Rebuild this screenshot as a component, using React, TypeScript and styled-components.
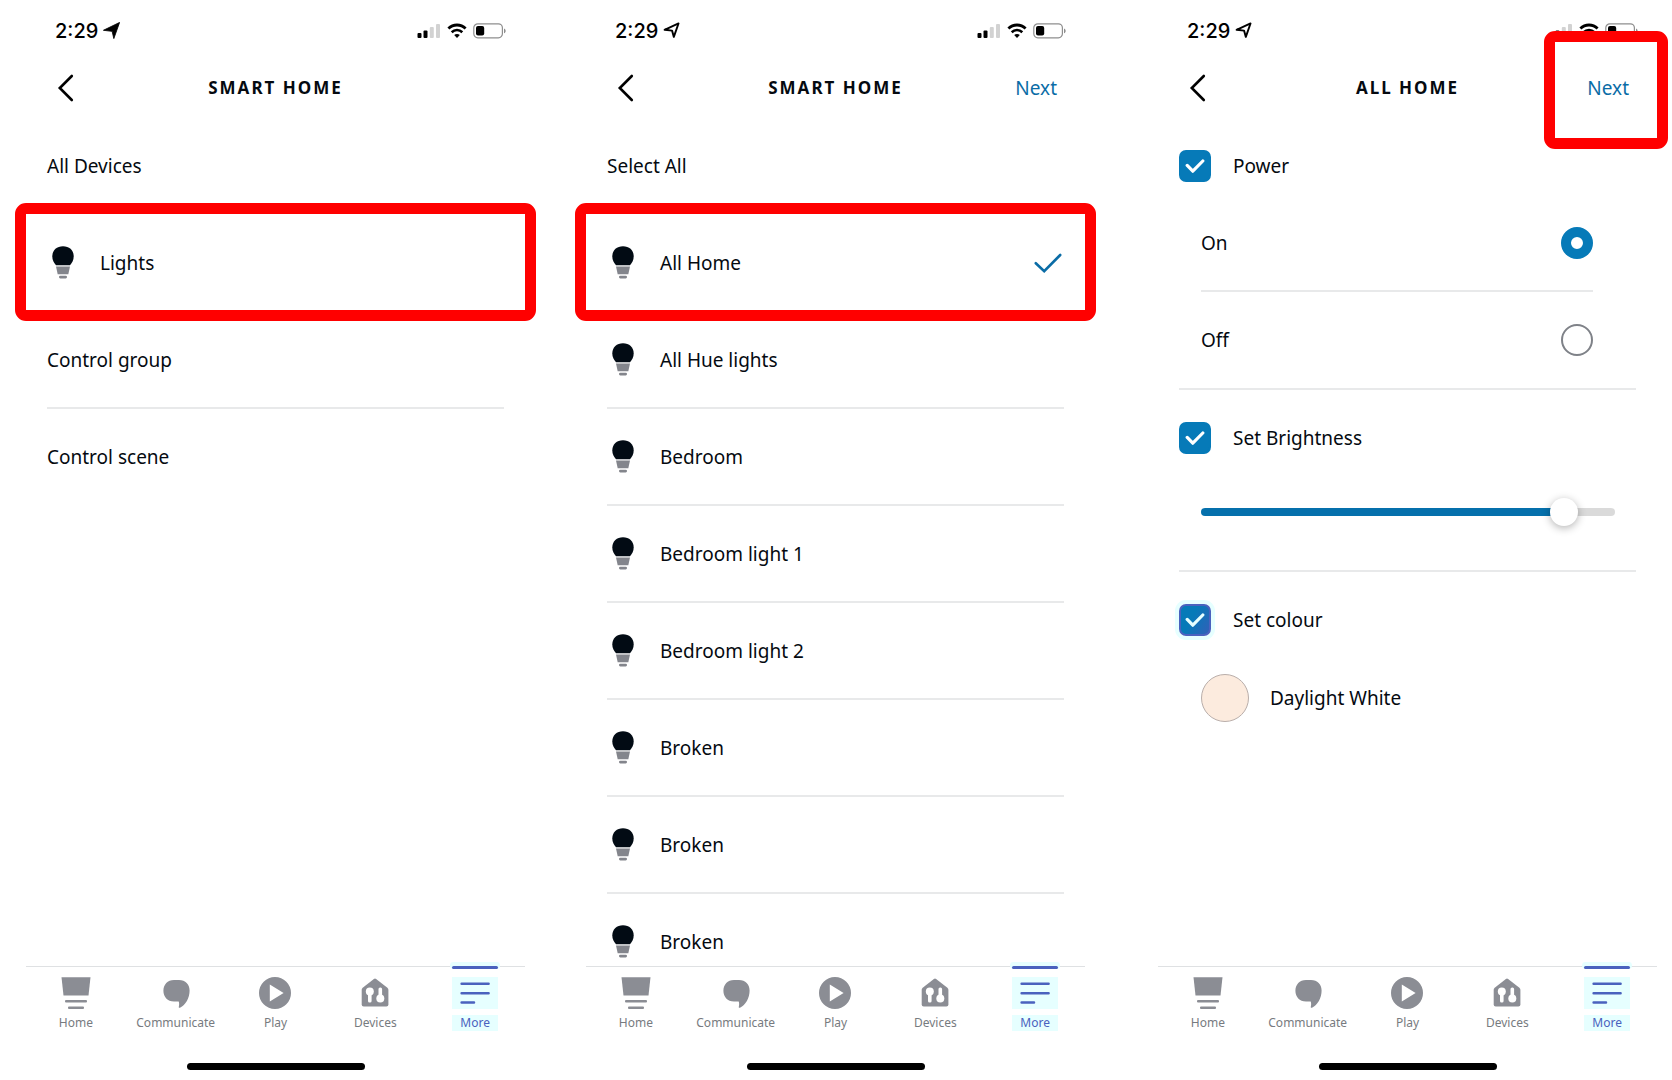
import React, { useState } from "react";
import styled, { createGlobalStyle, css } from "styled-components";

const colors = {
  ink: "#050a10",
  accent: "#0a6ca6",
  control: "#067ab8",
  active: "#4a62be",
  activeTint: "#e6ffff",
  muted: "#8b8d94",
  label: "#777b80",
  line: "#e8e9ea",
  mark: "#ff0000",
};

const GlobalStyle = createGlobalStyle`
  *, *::before, *::after { box-sizing: border-box; }
  body { margin: 0; background: #fff; }
  button, input { font: inherit; color: inherit; }
`;

const Page = styled.main`
  display: flex;
  height: 100vh;
  min-height: 640px;
  padding: 0 15px 0 26px;
  gap: 61px;
  overflow: hidden;
  background: #fff;
  color: ${colors.ink};
  font-family: "Noto Sans", "Open Sans", sans-serif;
  font-size: 19px;
  line-height: 24px;
`;

const PhoneFrame = styled.section<{ $spaced?: boolean }>`
  display: flex;
  flex: 1 1 0;
  flex-direction: column;
  min-width: 0;
  margin-left: ${(p) => (p.$spaced ? "12px" : "0")};
`;

const StatusRow = styled.div`
  display: flex;
  align-items: center;
  justify-content: space-between;
  height: 61px;
  padding: 0 18px 0 29px;
`;

const Clock = styled.div`
  display: flex;
  align-items: center;
  gap: 5px;
  font-family: Inter, Roboto, sans-serif;
  font-size: 20px;
  font-weight: 500;
  color: #000;
`;

const StatusIcons = styled.div`
  display: flex;
  align-items: center;
  gap: 6px;
`;

const TitleBar = styled.header`
  position: relative;
  display: grid;
  grid-template-columns: 1fr auto 1fr;
  align-items: center;
  height: 57px;
  padding: 0 28px 3px;
`;

const Title = styled.h1`
  grid-column: 2;
  margin: 0;
  font-size: 17px;
  font-weight: 700;
  letter-spacing: 2px;
`;

const PlainButton = styled.button`
  padding: 0;
  border: 0;
  background: none;
  cursor: pointer;
`;

const BackButton = styled(PlainButton)`
  display: flex;
  justify-self: start;
  padding-left: 3px;
`;

const NextButton = styled(PlainButton)`
  justify-self: end;
  color: ${colors.accent};
`;

const markStyle = css`
  position: absolute;
  border: 11px solid ${colors.mark};
  border-radius: 11px;
  pointer-events: none;
`;

const ActionMark = styled.span`
  ${markStyle}
  top: -30px;
  right: -11px;
  width: 124px;
  height: 118px;
`;

const RowMark = styled.span`
  ${markStyle}
  inset: -12px -11px -9px;
`;

const Body = styled.div`
  flex: 1 1 0;
  min-height: 0;
  margin: 0 -11px;
  padding: 0 11px;
  overflow: hidden auto;
  scrollbar-width: none;
`;

const List = styled.ul`
  margin: 0;
  padding: 0;
  list-style: none;
`;

const ListItem = styled.li`
  position: relative;
  padding: 0 21px;
`;

const RowButton = styled(PlainButton)<{ $divided?: boolean }>`
  display: flex;
  align-items: center;
  width: 100%;
  height: 97px;
  border-bottom: 2px solid ${(p) => (p.$divided ? colors.line : "transparent")};
  text-align: left;
`;

const BulbSlot = styled.span`
  display: flex;
  margin: 0 26px 0 5px;
`;

const RowLabel = styled.span`
  flex: 1;
`;

const SelectedSlot = styled.span`
  display: flex;
  padding-right: 2px;
`;

const Form = styled.form`
  padding: 0 21px;
`;

const Field = styled.section<{ $last?: boolean }>`
  padding-top: 32px;
  border-bottom: ${(p) => (p.$last ? "0" : `2px solid ${colors.line}`)};
`;

const CheckLabel = styled.label`
  display: flex;
  align-items: center;
  gap: 22px;
  height: 32px;
`;

const CheckSlot = styled.span`
  display: grid;
  > * {
    grid-area: 1 / 1;
  }
  svg {
    place-self: center;
    pointer-events: none;
  }
`;

const CheckInput = styled.input<{ $glow?: boolean }>`
  appearance: none;
  width: 32px;
  height: 32px;
  margin: 0;
  border: 2px solid ${colors.muted};
  border-radius: 7px;
  background: #fff;
  &:checked {
    border-color: ${(p) => (p.$glow ? colors.active : colors.control)};
    background: ${colors.control};
    ${(p) =>
      p.$glow &&
      css`
        background: linear-gradient(120deg, ${colors.control} 40%, #3160b8);
        box-shadow: 0 0 0 4px ${colors.activeTint};
      `}
  }
`;

const Options = styled.div`
  margin: 14px 43px 0 22px;
`;

const OptionLabel = styled.label<{ $divided?: boolean }>`
  display: flex;
  align-items: center;
  justify-content: space-between;
  height: 96px;
  border-bottom: ${(p) => (p.$divided ? `2px solid ${colors.line}` : "0")};
`;

const RadioInput = styled.input`
  appearance: none;
  width: 32px;
  height: 32px;
  margin: 0;
  border: 2px solid #7f8288;
  border-radius: 50%;
  background: #fff;
  &:checked {
    border: 10px solid ${colors.control};
  }
`;

const Slider = styled.input<{ $value: number }>`
  appearance: none;
  display: block;
  width: calc(100% - 43px);
  height: 28px;
  margin: 44px 21px 44px 22px;
  background: none;
  &::-webkit-slider-runnable-track {
    height: 8px;
    border-radius: 4px;
    background: linear-gradient(
      to right,
      #0570ac ${(p) => p.$value}%,
      #dadada ${(p) => p.$value}%
    );
  }
  &::-webkit-slider-thumb {
    appearance: none;
    width: 28px;
    height: 28px;
    margin-top: -10px;
    border-radius: 50%;
    background: #fff;
    box-shadow: 0 2px 8px rgba(0, 0, 0, 0.3);
  }
`;

const ColourButton = styled(PlainButton)`
  display: flex;
  align-items: center;
  gap: 21px;
  margin: 38px 0 0 22px;
`;

const Swatch = styled.span`
  width: 48px;
  height: 48px;
  border: 1px solid #b9aeaa;
  border-radius: 50%;
  background: #fcebde;
`;

const Tabs = styled.nav`
  display: flex;
  height: 97px;
  border-top: 1px solid #dfe1e3;
`;

const TabLink = styled.a<{ $active?: boolean }>`
  position: relative;
  display: flex;
  flex: 1 1 0;
  flex-direction: column;
  align-items: center;
  gap: 6px;
  padding-top: 10px;
  color: ${(p) => (p.$active ? colors.active : colors.muted)};
  font-size: 12px;
  line-height: 16px;
  text-decoration: none;
`;

const TabIcon = styled.span<{ $active?: boolean }>`
  display: flex;
  padding: 0 7px;
  background: ${(p) => (p.$active ? colors.activeTint : "none")};
`;

const TabText = styled.span<{ $active?: boolean }>`
  color: ${(p) => (p.$active ? colors.active : colors.label)};
  background: ${(p) => (p.$active ? colors.activeTint : "none")};
  padding: 0 8px;
`;

const TabIndicator = styled.span`
  position: absolute;
  top: -1px;
  width: 46px;
  height: 3px;
  border-radius: 2px;
  background: ${colors.active};
  box-shadow: 0 -2px 0 2px ${colors.activeTint};
`;

const HomeIndicator = styled.div`
  align-self: center;
  width: 178px;
  height: 7px;
  margin-bottom: 10px;
  border-radius: 4px;
  background: #000;
`;

const LocationArrow = ({ filled }: { filled?: boolean }) => (
  <svg width="17" height="17" viewBox="0 0 16 16" aria-hidden="true">
    <path
      d={filled ? "M15.6.4 10.2 15.6 8.6 8.8.4 7.8Z" : "M14.6 1.4 10.2 14 8.500 8.100 1.500 7.300Z"}
      fill={filled ? "#000" : "none"}
      stroke="#000"
      strokeWidth={filled ? 0.8 : 1.8}
      strokeLinejoin="round"
    />
  </svg>
);

const Signal = () => (
  <svg width="24" height="16" viewBox="0 0 24 16" aria-hidden="true">
    <rect x="0.5" y="10" width="4" height="5" rx="1" fill="#000" />
    <rect x="6.5" y="7.5" width="4" height="7.5" rx="1" fill="#000" />
    <rect x="12.8" y="4" width="4" height="11" rx="1" fill="#d2d2d2" />
    <rect x="19" y="1" width="4" height="14" rx="1" fill="#d2d2d2" />
  </svg>
);

const Wifi = () => (
  <svg width="20" height="16" viewBox="0 0 20 16" fill="none" aria-hidden="true">
    <path d="M1.4 5.6C6.2.8 13.8.8 18.6 5.6" stroke="#000" strokeWidth="2.8" />
    <path d="M4.7 9.2C7.7 6.3 12.3 6.3 15.3 9.2" stroke="#000" strokeWidth="2.6" />
    <path d="M10 15 7.2 12.1C8.8 10.7 11.2 10.7 12.8 12.1Z" fill="#000" />
  </svg>
);

const Battery = () => (
  <svg width="34" height="16" viewBox="0 0 34 16" aria-hidden="true">
    <rect x="0.8" y="0.8" width="28.6" height="14" rx="4" fill="none" stroke="#8e8e8e" strokeWidth="1.2" />
    <rect x="3" y="3" width="8.2" height="9.6" rx="2" fill="#000" />
    <path d="M31 5.4C33.2 6.2 33.2 9.4 31 10.2Z" fill="#8e8e8e" />
  </svg>
);

const BackIcon = () => (
  <svg width="17" height="28" viewBox="0 0 17 28" fill="none" aria-hidden="true">
    <path d="M14.8 2 2.8 14l12 12" stroke="#000" strokeWidth="2.6" strokeLinecap="round" strokeLinejoin="miter" />
  </svg>
);

const Bulb = () => (
  <svg width="22" height="33" viewBox="0 0 22 33" aria-hidden="true">
    <path
      d="M4 19.2C1.8 16.6.3 13.9.3 10.4.3 4 4.8.2 11 .2S21.7 4 21.7 10.4c0 3.5-1.5 6.2-3.7 8.8Z"
      fill="#020b14"
    />
    <path d="M4 20.4h14l-1.7 7.8H5.7Z" fill="#83858c" />
    <rect x="7" y="29.8" width="8" height="2.6" rx="1.3" fill="#83858c" />
  </svg>
);

const SelectedIcon = () => (
  <svg width="28" height="20" viewBox="0 0 28 20" fill="none" aria-hidden="true">
    <path d="m1.8 10.2 8.4 8L26.2 2" stroke={colors.accent} strokeWidth="2.6" strokeLinecap="round" />
  </svg>
);

const BoxTick = ({ color }: { color: string }) => (
  <svg width="20" height="16" viewBox="0 0 20 16" fill="none" aria-hidden="true">
    <path d="m2.2 7.4 5.6 5.8L17.8 3" stroke={color} strokeWidth="3.2" strokeLinecap="round" strokeLinejoin="round" />
  </svg>
);

const tabIcons: Record<string, React.ReactNode> = {
  Home: (
    <g fill="currentColor">
      <path d="M1.5.3h29l-2 18.2h-25Z" />
      <rect x="5" y="23" width="22" height="2.4" rx="1" />
      <rect x="8" y="29.6" width="16" height="2.4" rx="1" />
    </g>
  ),
  Communicate: (
    <path
      fill="currentColor"
      d="M14 3h5c6.500 0 10.600 4.500 10.600 10.500 0 7.500-4 14.500-9.600 17.200-.9.400-1.400 0-1.200-.900.500-2 .500-3.600-.1-5.300H14C7.500 24.500 3.400 20 3.400 13.800S7.500 3 14 3Z"
    />
  ),
  Play: (
    <path
      fill="currentColor"
      fillRule="evenodd"
      d="M16 0a16 16 0 1 1 0 32 16 16 0 0 1 0-32ZM10.800 7.500v17L24.600 16Z"
    />
  ),
  Devices: (
    <>
      <path
        fill="currentColor"
        d="M14.900 1.900q1.100-.8 2.200 0L28.400 10.800q1 .8 1 2V27.500q0 2-2 2H4.700q-2 0-2-2V12.800q0-1.200 1-2Z"
      />
      <g fill="#fff">
        <circle cx="10.800" cy="14.500" r="4" />
        <rect x="9" y="15" width="3.600" height="10.600" rx="1.600" />
        <circle cx="21.300" cy="21.400" r="4" />
        <rect x="19.500" y="10.400" width="3.600" height="10.600" rx="1.600" />
      </g>
    </>
  ),
  More: (
    <path
      d="M2.600 6.800h27M2.600 16.200h27M2.600 25.500h12.400"
      stroke="currentColor"
      strokeWidth="2.500"
      strokeLinecap="round"
    />
  ),
};

const tabNames = ["Home", "Communicate", "Play", "Devices", "More"];

const TabBar = () => (
  <Tabs aria-label="Main">
    {tabNames.map((name) => {
      const active = name === "More";
      return (
        <TabLink key={name} href={`#${name.toLowerCase()}`} $active={active}>
          {active && <TabIndicator />}
          <TabIcon $active={active}>
            <svg width="32" height="32" viewBox="0 0 32 32" fill="none" aria-hidden="true">
              {tabIcons[name]}
            </svg>
          </TabIcon>
          <TabText $active={active}>{name}</TabText>
        </TabLink>
      );
    })}
  </Tabs>
);

type PhoneProps = {
  title: string;
  next?: boolean;
  markNext?: boolean;
  located?: boolean;
  spaced?: boolean;
  children: React.ReactNode;
};

const Phone = ({ title, next, markNext, located, spaced, children }: PhoneProps) => (
  <PhoneFrame $spaced={spaced}>
    <StatusRow>
      <Clock>
        2:29
        <LocationArrow filled={located} />
      </Clock>
      <StatusIcons>
        <Signal />
        <Wifi />
        <Battery />
      </StatusIcons>
    </StatusRow>
    <TitleBar>
      <BackButton type="button" aria-label="Back">
        <BackIcon />
      </BackButton>
      <Title>{title}</Title>
      {next && <NextButton type="button">Next</NextButton>}
      {markNext && <ActionMark />}
    </TitleBar>
    <Body>{children}</Body>
    <TabBar />
    <HomeIndicator />
  </PhoneFrame>
);

type Row = { label: string; bulb?: boolean; marked?: boolean; selected?: boolean; divided?: boolean };

const deviceRows: Row[] = [
  { label: "All Devices" },
  { label: "Lights", bulb: true, marked: true },
  { label: "Control group", divided: true },
  { label: "Control scene" },
];

const lightRows: Row[] = [
  { label: "Select All" },
  { label: "All Home", bulb: true, marked: true, selected: true },
  { label: "All Hue lights", bulb: true, divided: true },
  { label: "Bedroom", bulb: true, divided: true },
  { label: "Bedroom light 1", bulb: true, divided: true },
  { label: "Bedroom light 2", bulb: true, divided: true },
  { label: "Broken", bulb: true, divided: true },
  { label: "Broken", bulb: true, divided: true },
  { label: "Broken", bulb: true },
];

const RowList = ({ rows }: { rows: Row[] }) => (
  <List>
    {rows.map((row, index) => (
      <ListItem key={index}>
        <RowButton type="button" $divided={row.divided}>
          {row.bulb && (
            <BulbSlot>
              <Bulb />
            </BulbSlot>
          )}
          <RowLabel>{row.label}</RowLabel>
          {row.selected && (
            <SelectedSlot>
              <SelectedIcon />
            </SelectedSlot>
          )}
        </RowButton>
        {row.marked && <RowMark />}
      </ListItem>
    ))}
  </List>
);

const Toggle = ({ id, label, glow }: { id: string; label: string; glow?: boolean }) => {
  const [checked, setChecked] = useState(true);
  return (
    <CheckLabel htmlFor={id}>
      <CheckSlot>
        <CheckInput
          id={id}
          type="checkbox"
          checked={checked}
          onChange={(e) => setChecked(e.target.checked)}
          $glow={glow}
        />
        {checked && <BoxTick color={glow ? colors.activeTint : "#fff"} />}
      </CheckSlot>
      {label}
    </CheckLabel>
  );
};

const LightForm = () => {
  const [power, setPower] = useState("On");
  const [brightness, setBrightness] = useState(90.5);
  return (
    <Form>
      <Field>
        <Toggle id="power" label="Power" />
        <Options role="radiogroup" aria-label="Power">
          {["On", "Off"].map((option) => (
            <OptionLabel key={option} htmlFor={`power-${option}`} $divided={option === "On"}>
              {option}
              <RadioInput
                id={`power-${option}`}
                type="radio"
                name="power-state"
                checked={power === option}
                onChange={() => setPower(option)}
              />
            </OptionLabel>
          ))}
        </Options>
      </Field>
      <Field>
        <Toggle id="brightness" label="Set Brightness" />
        <Slider
          type="range"
          min={0}
          max={100}
          step={0.5}
          value={brightness}
          onChange={(e) => setBrightness(Number(e.target.value))}
          aria-label="Brightness"
          $value={brightness}
        />
      </Field>
      <Field $last>
        <Toggle id="colour" label="Set colour" glow />
        <ColourButton type="button">
          <Swatch />
          Daylight White
        </ColourButton>
      </Field>
    </Form>
  );
};

export default function App() {
  return (
    <>
      <GlobalStyle />
      <Page>
        <Phone title="SMART HOME" located>
          <RowList rows={deviceRows} />
        </Phone>
        <Phone title="SMART HOME" next>
          <RowList rows={lightRows} />
        </Phone>
        <Phone title="ALL HOME" next markNext spaced>
          <LightForm />
        </Phone>
      </Page>
    </>
  );
}
